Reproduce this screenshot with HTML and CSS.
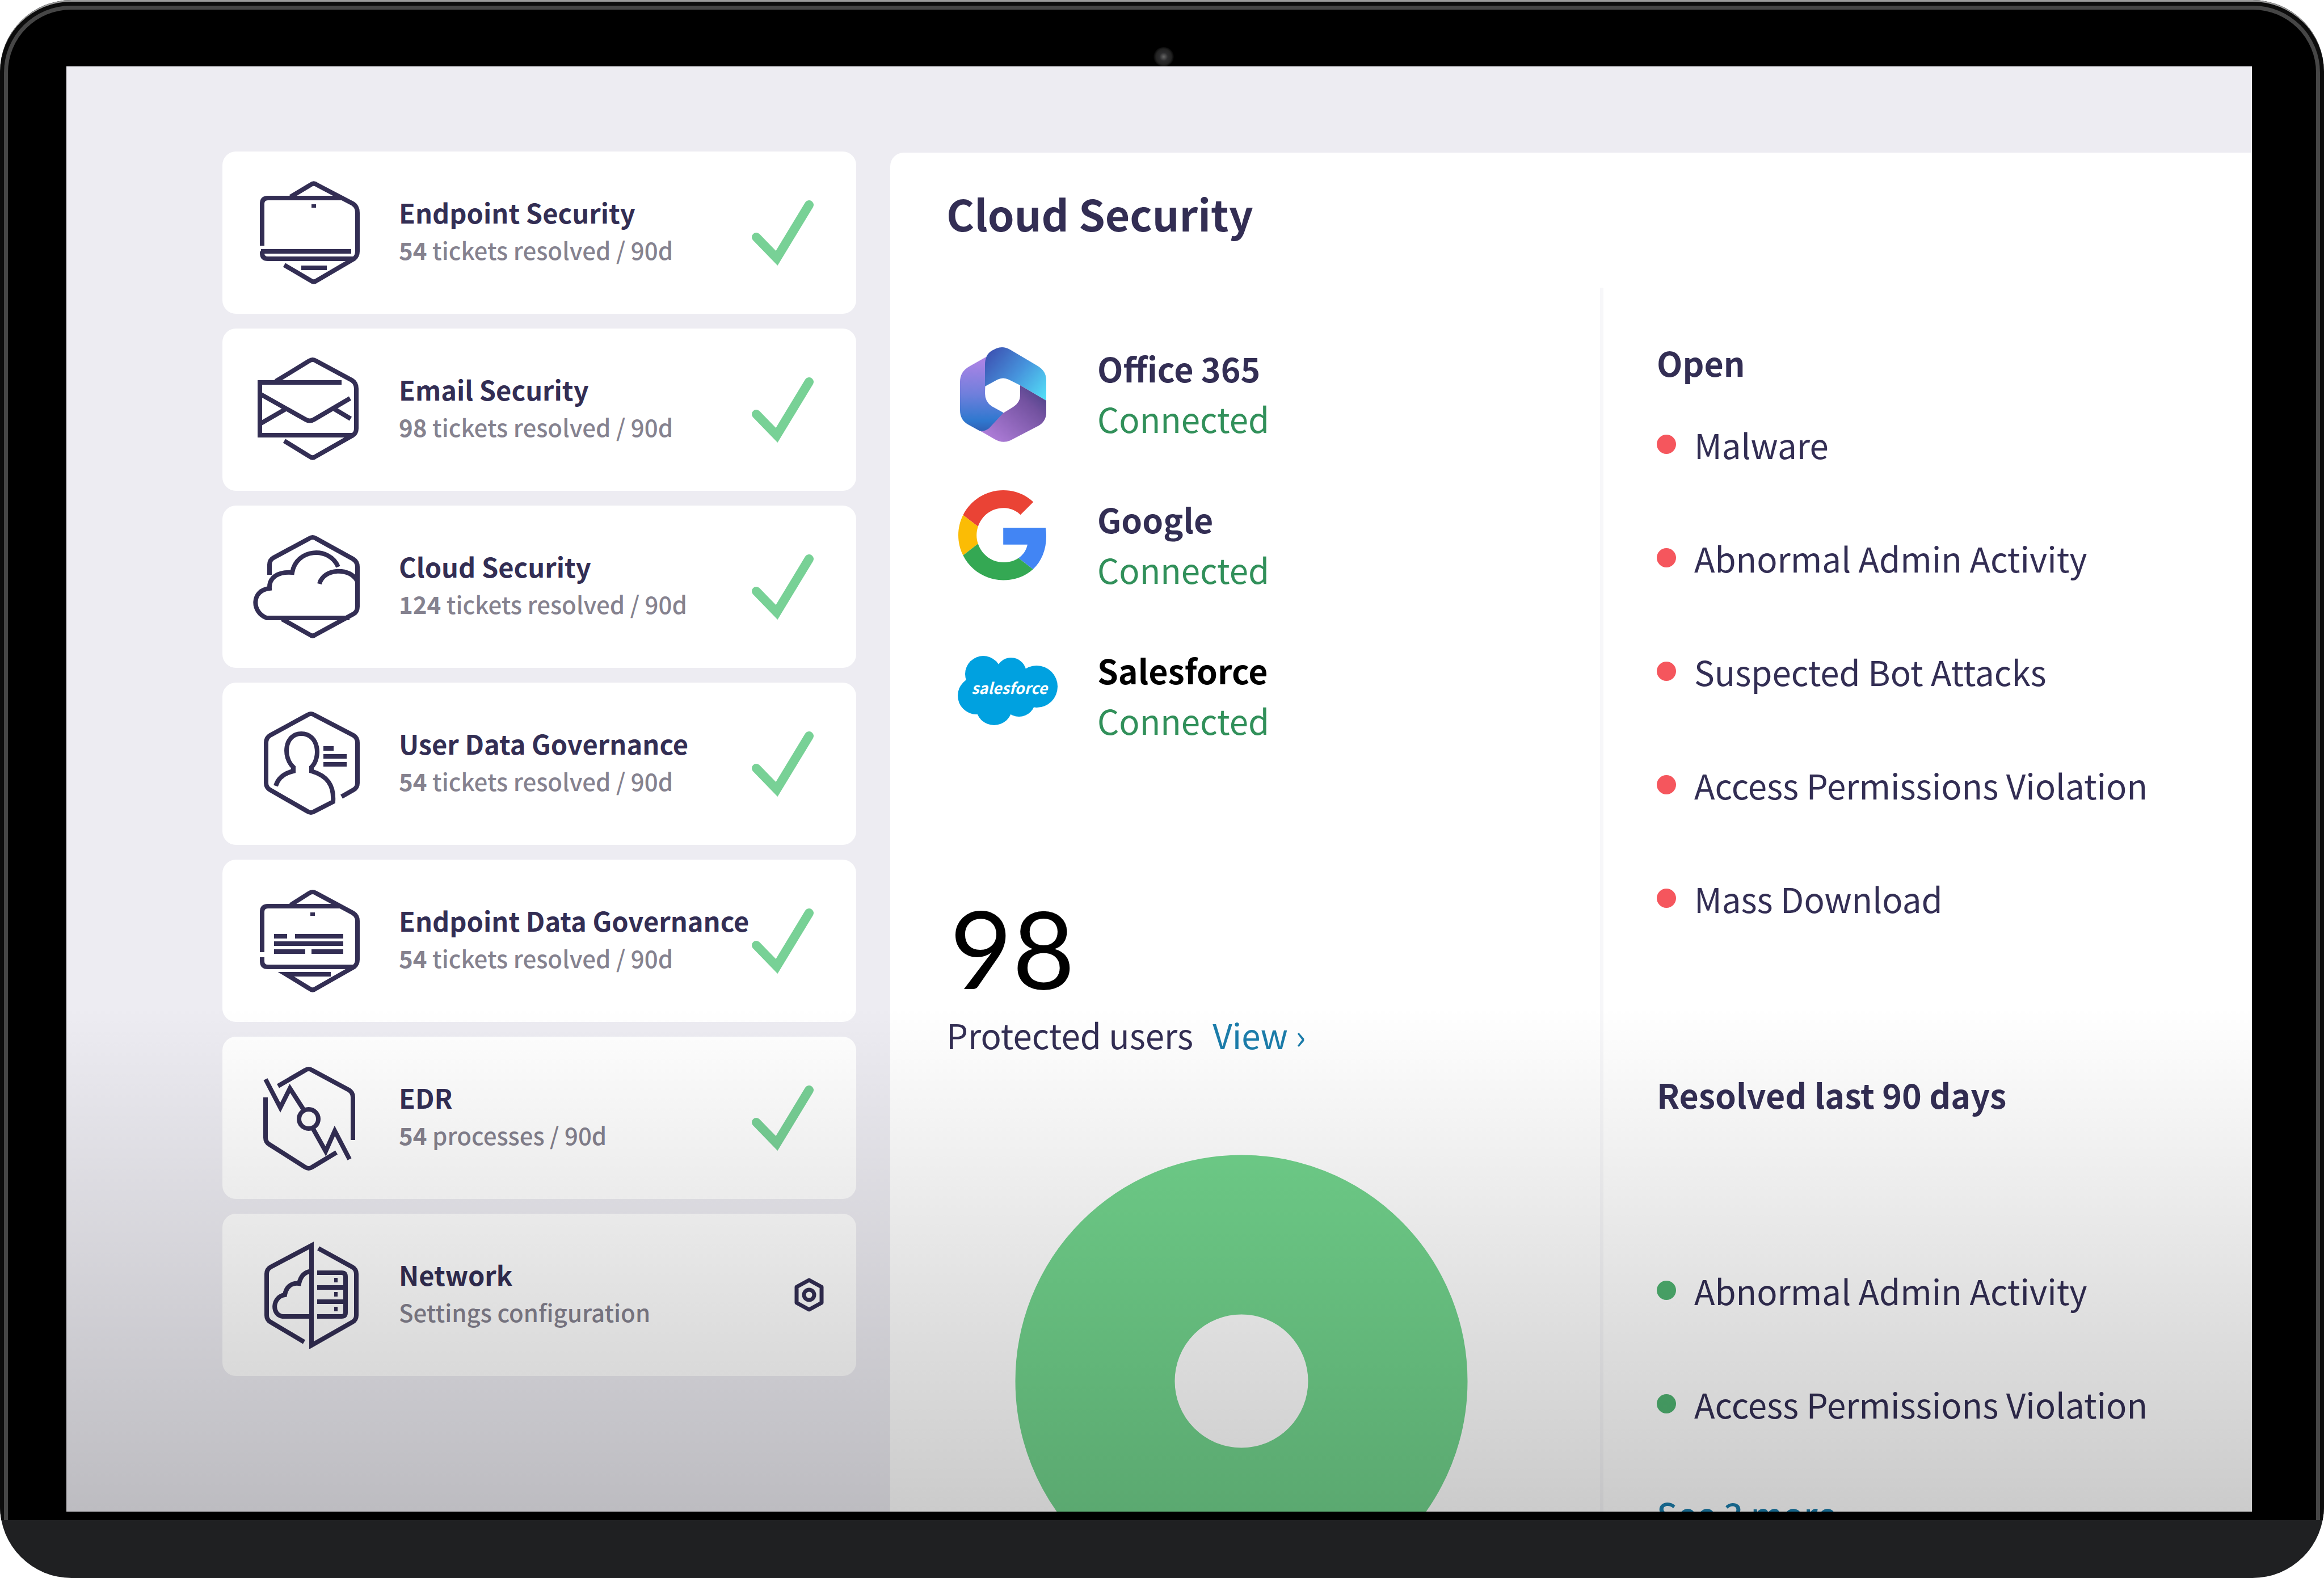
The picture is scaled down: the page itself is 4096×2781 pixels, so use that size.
FILE: index.html
```html
<!DOCTYPE html>
<html lang="en">
<head>
<meta charset="utf-8">
<title>Cloud Security</title>
<link rel="stylesheet" href="styles.css">
</head>
<body>
<div class="device">
  <div class="bezel">
    <div class="glass">
      <span class="camera"></span>
      <div class="screen">
        <ul class="modules">
          <li class="card">
            <svg class="card-icon" viewBox="0 0 190 190" aria-hidden="true"><path d="M66 32L101 11Q107 6 113 11L176 44Q184 49 184 60V128Q184 136 178 141L113 179Q107 184 101 179L55 152M16 118V44Q16 34 26 34H156M14 128H173M16 128V131Q16 141 26 141H178M85 157H130M107 45V51"/></svg>
            <div class="card-text"><h2>Endpoint Security</h2><p><b>54</b> tickets resolved / 90d</p></div>
            <svg class="check" viewBox="0 0 110 116" aria-hidden="true"><path d="M9 66L45 103L102 9"/></svg>
          </li>
          <li class="card">
            <svg class="card-icon" viewBox="0 0 190 190" aria-hidden="true"><path d="M40 45L99 9Q105 5 111 9L174 43Q182 48 182 58V128Q182 136 176 140L111 177Q105 182 99 177L55 150M156 47H12V140H178M12 67L92 112Q100 117 108 112L171 75M14 119L59 93M142 93L172 111"/></svg>
            <div class="card-text"><h2>Email Security</h2><p><b>98</b> tickets resolved / 90d</p></div>
            <svg class="check" viewBox="0 0 110 116" aria-hidden="true"><path d="M9 66L45 103L102 9"/></svg>
          </li>
          <li class="card">
            <svg class="card-icon" viewBox="0 0 190 190" aria-hidden="true"><path d="M29 74V56Q29 48 36 44L99 10Q105 6 111 10L176 46Q184 51 184 60V130Q184 139 177 143L111 179Q105 184 99 179L51 152M170 150H24C-3 140 -3 101 29 98C28 80 42 68 69 70C76 28 134 23 150 60M117 90C124 62 172 60 184 86"/></svg>
            <div class="card-text"><h2>Cloud Security</h2><p><b>124</b> tickets resolved / 90d</p></div>
            <svg class="check" viewBox="0 0 110 116" aria-hidden="true"><path d="M9 66L45 103L102 9"/></svg>
          </li>
          <li class="card">
            <svg class="card-icon" viewBox="0 0 190 190" aria-hidden="true"><path d="M156 153L177 141Q184 137 184 129V58Q184 49 177 45L108 9Q102 5 96 9L30 45Q23 49 23 58V129Q23 137 30 141L96 179Q102 183 108 179L141 162C143 132 130 116 103 108V101C120 84 116 42 85 42C55 42 52 84 71 101V108C54 112 44 121 40 134M124 68H142M124 82H165M124 96H165"/></svg>
            <div class="card-text"><h2>User Data Governance</h2><p><b>54</b> tickets resolved / 90d</p></div>
            <svg class="check" viewBox="0 0 110 116" aria-hidden="true"><path d="M9 66L45 103L102 9"/></svg>
          </li>
          <li class="card">
            <svg class="card-icon" viewBox="0 0 190 190" aria-hidden="true"><path d="M66 32L99 11Q105 7 111 11L176 46Q184 51 184 60V128Q184 136 178 141L111 179Q105 184 99 179L58 154H137M16 115V44Q16 34 26 34H154M16 124V131Q16 141 26 141H178M37 87H60M74 87H159M37 100H159M37 114H92M103 114H159M105 45V51"/></svg>
            <div class="card-text"><h2>Endpoint Data Governance</h2><p><b>54</b> tickets resolved / 90d</p></div>
            <svg class="check" viewBox="0 0 110 116" aria-hidden="true"><path d="M9 66L45 103L102 9"/></svg>
          </li>
          <li class="card">
            <svg class="card-icon" viewBox="0 0 190 190" aria-hidden="true"><path d="M44 39L92 11Q98 7 104 11L169 46Q176 50 176 59V134M22 59V130Q22 138 29 142L92 182Q98 186 104 182L147 156M22 27L48 77L65 43L90 82M105 113L128 154L144 118L170 168"/><circle cx="98" cy="97" r="17"/></svg>
            <div class="card-text"><h2>EDR</h2><p><b>54</b> processes / 90d</p></div>
            <svg class="check" viewBox="0 0 110 116" aria-hidden="true"><path d="M9 66L45 103L102 9"/></svg>
          </li>
          <li class="card">
            <svg class="card-icon" viewBox="0 0 190 190" aria-hidden="true"><path d="M90 178L31 143Q24 139 24 131V58Q24 50 31 46L103 8V184L175 143Q182 139 182 131V58Q182 50 175 46L115 13M103 53C90 55 84 62 81 75C67 73 58 82 56 95C34 98 32 130 52 133H103M113 56H156Q163 56 163 63V126Q163 133 156 133H113M113 82H163M113 107H163M143 69H149M143 94H149M143 120H149"/></svg>
            <div class="card-text"><h2>Network</h2><p>Settings configuration</p></div>
            <button class="settings" type="button" aria-label="Network settings">
              <svg viewBox="0 0 56 60" aria-hidden="true"><path d="M28 4L50 16V44L28 56L6 44V16Z"/><circle cx="28" cy="30" r="9"/></svg>
            </button>
          </li>
        </ul>

        <main class="panel">
          <h1>Cloud Security</h1>
          <div class="panel-body">
            <section class="overview">
              <ul class="services">
                <li class="service">
                  <svg class="logo" viewBox="0 0 176 190" aria-hidden="true">
                    <defs>
                      <linearGradient id="o-left" x1="0" y1="0" x2="0" y2="1"><stop offset="0" stop-color="#b184e6"/><stop offset=".5" stop-color="#6f7fdc"/><stop offset=".85" stop-color="#2f78cf"/><stop offset="1" stop-color="#2f5fb4"/></linearGradient>
                      <linearGradient id="o-top" x1="0" y1=".2" x2="1" y2=".9"><stop offset="0" stop-color="#3d55b4"/><stop offset=".5" stop-color="#4693dc"/><stop offset="1" stop-color="#53dcf6"/></linearGradient>
                      <linearGradient id="o-bottom" x1="1" y1="0" x2="0" y2="1"><stop offset="0" stop-color="#3f3d80"/><stop offset=".3" stop-color="#7352a0"/><stop offset="1" stop-color="#b884e2"/></linearGradient>
                    </defs>
                    <path fill="url(#o-left)" d="M50 34L20 51Q4 60 4 78V128Q4 145 18 153L38 164Q46 168 53 163L84 138L80 132L60 121Q48 113 48 98Z"/>
                    <path fill="url(#o-top)" d="M48 86V48Q48 30 60 23L68 19Q80 14 92 21L141 50Q156 59 156 75V111L110 84L90 74Q80 69 70 74Z"/>
                    <path fill="url(#o-bottom)" d="M110 84L156 111V132Q156 147 143 155L95 180Q80 188 65 179L39 164Q46 166 55 160L80 133L98 122Q110 114 110 102Z"/>
                  </svg>
                  <div class="service-text"><h3>Office 365</h3><p>Connected</p></div>
                </li>
                <li class="service">
                  <svg class="logo" viewBox="0 0 176 190" aria-hidden="true">
                    <g transform="translate(1 3) scale(3.3)">
                      <path fill="#ea4335" d="M24 9.500c3.540 0 6.710 1.220 9.210 3.600l6.850-6.850C35.900 2.380 30.470 0 24 0 14.620 0 6.510 5.380 2.560 13.220l7.980 6.190C12.430 13.720 17.740 9.500 24 9.500z"/>
                      <path fill="#4285f4" d="M46.980 24.550c0-1.570-.15-3.090-.38-4.550H24v9.020h12.940c-.58 2.960-2.260 5.480-4.780 7.180l7.730 6c4.510-4.180 7.090-10.360 7.090-17.650z"/>
                      <path fill="#fbbc05" d="M10.530 28.590c-.48-1.450-.76-2.990-.76-4.590s.27-3.140.76-4.590l-7.980-6.190C.92 16.460 0 20.120 0 24c0 3.880.92 7.540 2.560 10.780l7.970-6.190z"/>
                      <path fill="#34a853" d="M24 48c6.480 0 11.930-2.130 15.890-5.810l-7.730-6c-2.150 1.450-4.920 2.300-8.160 2.300-6.260 0-11.570-4.220-13.470-9.910l-7.980 6.190C6.510 42.620 14.620 48 24 48z"/>
                    </g>
                  </svg>
                  <div class="service-text"><h3>Google</h3><p>Connected</p></div>
                </li>
                <li class="service service-dark">
                  <svg class="logo" viewBox="0 0 176 190" aria-hidden="true">
                    <g fill="#00a1e0"><circle cx="45" cy="61" r="32"/><circle cx="94" cy="59" r="27"/><circle cx="139" cy="83" r="37"/><circle cx="108" cy="107" r="29"/><circle cx="64" cy="119" r="32"/><circle cx="33" cy="99" r="33"/><path d="M40 60H120V110H40Z"/></g>
                    <text class="logo-word" x="91" y="96" text-anchor="middle">salesforce</text>
                  </svg>
                  <div class="service-text"><h3>Salesforce</h3><p>Connected</p></div>
                </li>
              </ul>
              <p class="count">98</p>
              <p class="count-label">Protected users <a href="#users">View ›</a></p>
              <svg class="donut" viewBox="0 0 798 798" aria-hidden="true"><circle cx="399" cy="399" r="258"/></svg>
            </section>

            <section class="tickets">
              <h3>Open</h3>
              <ul class="events open">
                <li>Malware</li>
                <li>Abnormal Admin Activity</li>
                <li>Suspected Bot Attacks</li>
                <li>Access Permissions Violation</li>
                <li>Mass Download</li>
              </ul>
              <h3>Resolved last 90 days</h3>
              <ul class="events resolved">
                <li>Abnormal Admin Activity</li>
                <li>Access Permissions Violation</li>
              </ul>
              <a class="more" href="#resolved">See 3 more</a>
            </section>
          </div>
        </main>
      </div>
    </div>
  </div>
</div>
</body>
</html>
```
FILE: styles.css
```css
* { box-sizing: border-box; }

body,
h1, h2, h3, p, ul {
  margin: 0;
  padding: 0;
}

body {
  background: #fff;
  color: #332e54;
  font-family: "Noto Sans CJK SC", "Noto Sans", sans-serif;
  font-size: 60px;
  line-height: 88px;
}

ul { list-style: none; }
a { color: #1b7dab; text-decoration: none; }

/* Tablet body */
.device {
  display: flex;
  flex-direction: column;
  height: 100vh;
  padding-bottom: 102px;
  overflow: hidden;
  background: #1f2022;
  border-radius: 126px;
}

.bezel {
  display: flex;
  flex: 1;
  min-height: 0;
  padding: 7px 7px 0;
  background: #0c0c0c;
  border-top: 3px solid #999;
  border-radius: 126px 126px 0 0;
}

.glass {
  position: relative;
  display: flex;
  flex: 1;
  min-width: 0;
  padding: 100px 113px 15px 103px;
  background: #000;
  border: 7px solid #464646;
  border-bottom: 0;
  border-radius: 118px 118px 0 0;
}

.camera {
  position: absolute;
  top: 66px;
  left: calc(50% - 15px);
  width: 36px;
  height: 34px;
  background: radial-gradient(circle, #666 0, #2c2c2e 30%, #222 55%, #000 75%);
  border-radius: 50%;
}

.screen {
  position: relative;
  display: grid;
  flex: 1;
  grid-template-columns: minmax(0, 1117fr) minmax(0, 2400fr);
  gap: 60px;
  min-width: 0;
  padding: 150px 0 0 275px;
  overflow: hidden;
  background: #edecf2;
}

/* Shade that darkens the lower third of the screen */
.screen::after {
  position: absolute;
  inset: 0;
  background: linear-gradient(rgba(0, 0, 0, 0) 65%, rgba(0, 0, 0, .205) 100%);
  content: "";
  pointer-events: none;
}

/* Module cards */
.modules {
  display: flex;
  flex-direction: column;
  gap: 26px;
}

.card {
  display: flex;
  flex: none;
  align-items: center;
  height: 286px;
  padding: 0 75px 0 54px;
  background: #fff;
  border-radius: 24px;
}

.card-icon {
  flex: none;
  width: 190px;
  height: 190px;
  margin-right: 67px;
  fill: none;
  stroke: #332e54;
  stroke-width: 8;
}

.card-text {
  flex: 1;
  min-width: 0;
  padding-bottom: 8px;
  white-space: nowrap;
}

.card-text h2 {
  font-size: 47px;
  font-weight: 600;
  line-height: 68px;
}

.card-text p {
  color: #85828f;
  font-size: 42px;
  font-weight: 500;
  line-height: 64px;
}

.card-text b { font-weight: 600; }

.check {
  flex: none;
  width: 110px;
  height: 116px;
  fill: none;
  stroke: #78d196;
  stroke-linecap: round;
  stroke-width: 16;
}

.settings {
  display: flex;
  margin-right: -20px;
  padding: 0;
  background: none;
  border: 0;
}

.settings svg {
  width: 56px;
  height: 60px;
  fill: none;
  stroke: #332e54;
  stroke-linejoin: round;
  stroke-width: 7;
}

/* Detail panel */
.panel {
  display: flex;
  flex-direction: column;
  margin-top: 2px;
  padding-top: 57px;
  background: #fff;
  border-radius: 24px 0 0;
}

.panel h1 {
  padding-left: 99px;
  font-size: 75px;
  font-weight: 600;
  line-height: 100px;
}

.panel-body {
  display: grid;
  flex: 1;
  grid-template-columns: minmax(0, 1251fr) minmax(0, 1149fr);
  margin-top: 81px;
}

.overview { padding: 88px 0 0 99px; }

.services {
  display: flex;
  flex-direction: column;
  gap: 76px;
  padding-left: 20px;
}

.service {
  display: flex;
  gap: 70px;
}

.logo {
  flex: none;
  width: 176px;
  height: 190px;
}

.logo-word {
  fill: #fff;
  font-size: 27px;
  font-style: italic;
  font-weight: 600;
}

.service-text { padding-top: 10px; }

.panel h3 {
  font-size: 59px;
  font-weight: 600;
}

.service-text p { color: #31905a; }
.panel .service-dark h3 { color: #000; }

.count {
  margin-top: 252px;
  padding-left: 6px;
  color: #000;
  font-family: Lato, sans-serif;
  font-size: 190px;
  line-height: 200px;
}

.count-label {
  display: flex;
  gap: 34px;
  margin-top: 10px;
}

.donut {
  display: block;
  width: 798px;
  height: 798px;
  margin: 168px 0 0 121px;
  fill: none;
  stroke: #72d48d;
  stroke-width: 281;
}

.tickets {
  padding: 88px 0 0 94px;
  border-left: 6px solid #f7f7f9;
}

.events {
  display: flex;
  flex-direction: column;
  gap: 112px;
}

.events li {
  display: flex;
  align-items: center;
  gap: 32px;
}

.events li::before {
  width: 34px;
  height: 34px;
  border-radius: 50%;
  content: "";
}

.open { margin: 56px 0 258px; }
.open li::before { background: #f5565d; }
.resolved { margin: 257px 0 105px; }
.resolved li::before { background: #4fb371; }
.more { font-weight: 500; }
```
